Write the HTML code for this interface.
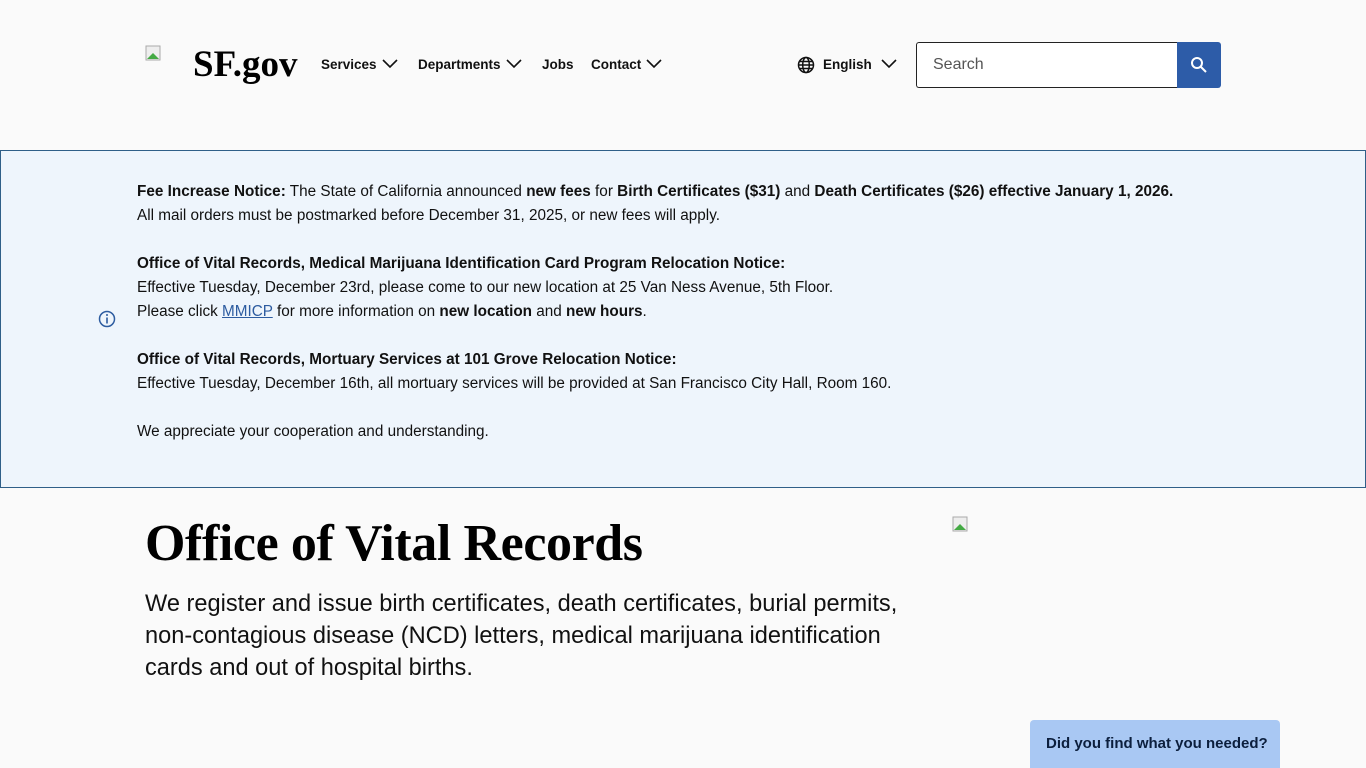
<!DOCTYPE html>
<html><head><meta charset="utf-8"><style>
html,body{margin:0;overflow:hidden}
body{background:#fafafa;font-family:"Liberation Sans",Arial,sans-serif;color:#000;width:1366px;height:768px;position:relative}
.a{position:absolute}
.nav{font-size:13.5px;font-weight:bold;color:#111;top:57px}
.chev{display:inline-block;vertical-align:middle;margin-left:5px;margin-top:-3px}
.box{top:150px;left:0;width:1364px;height:336px;background:#eef5fc;border:1px solid #2f5f88}
.t{left:137px;top:180px;font-size:15.3px;line-height:24px;color:#111}
a{color:#2d5ca0}
</style></head><body>
<svg class="a" style="left:145px;top:45px" width="16" height="16"><rect x="1" y="1" width="14" height="14" fill="#eee" stroke="#aaa"/><path d="M2 14 L8 8 L14 14Z" fill="#4a4"/></svg>
<div class="a" style="left:193px;top:43px;font-family:'Liberation Serif',serif;font-weight:bold;font-size:37px;letter-spacing:0">SF.gov</div>
<div class="a nav" style="left:321px">Services<svg class="chev" width="16" height="10"><path d="M1 1l7 7 7-7" fill="none" stroke="#111" stroke-width="1.6"/></svg></div>
<div class="a nav" style="left:418px">Departments<svg class="chev" width="16" height="10"><path d="M1 1l7 7 7-7" fill="none" stroke="#111" stroke-width="1.6"/></svg></div>
<div class="a nav" style="left:542px">Jobs</div>
<div class="a nav" style="left:591px">Contact<svg class="chev" width="16" height="10"><path d="M1 1l7 7 7-7" fill="none" stroke="#111" stroke-width="1.6"/></svg></div>
<svg class="a" style="left:797px;top:56px" width="18" height="18" viewBox="0 0 18 18" fill="none" stroke="#111" stroke-width="1.5"><circle cx="9" cy="9" r="7.5"/><ellipse cx="9" cy="9" rx="3.3" ry="7.5"/><path d="M1.5 9h15M2.5 5.5h13M2.5 12.5h13"/></svg>
<div class="a nav" style="left:823px">English<svg class="chev" style="margin-left:9px" width="16" height="10"><path d="M1 1l7 7 7-7" fill="none" stroke="#111" stroke-width="1.6"/></svg></div>
<div class="a" style="left:916px;top:42px;width:261px;height:44px;border:1px solid #222;border-right:none;border-radius:3px 0 0 3px;background:#fff"></div>
<div class="a" style="left:933px;top:56px;font-size:16px;color:#555">Search</div>
<div class="a" style="left:1177px;top:42px;width:44px;height:46px;background:#2d5ca8;border-radius:0 3px 3px 0"></div>
<svg class="a" style="left:1190px;top:56px" width="18" height="18"><circle cx="7" cy="7" r="5" fill="none" stroke="#fff" stroke-width="2"/><path d="M11 11l5 5" stroke="#fff" stroke-width="2"/></svg>
<div class="a box"></div>
<svg class="a" style="left:98px;top:310px" width="18" height="18"><circle cx="9" cy="9" r="7.5" fill="none" stroke="#2d5ca0" stroke-width="1.5"/><rect x="8.2" y="7.5" width="1.6" height="6" fill="#2d5ca0"/><circle cx="9" cy="5" r="1" fill="#2d5ca0"/></svg>
<div class="a t">
<b>Fee Increase Notice:</b> The State of California announced <b>new fees</b> for <b>Birth Certificates ($31)</b> and <b>Death Certificates ($26) effective January 1, 2026.</b><br>All mail orders must be postmarked before December 31, 2025, or new fees will apply.<br><br>
<b>Office of Vital Records, Medical Marijuana Identification Card Program Relocation Notice:</b><br>Effective Tuesday, December 23rd, please come to our new location at 25 Van Ness Avenue, 5th Floor.<br>Please click <a href="#">MMICP</a> for more information on <b>new location</b> and <b>new hours</b>.<br><br>
<b>Office of Vital Records, Mortuary Services at 101 Grove Relocation Notice:</b><br>Effective Tuesday, December 16th, all mortuary services will be provided at San Francisco City Hall, Room 160.<br><br>We appreciate your cooperation and understanding.</div>
<div class="a" style="left:145px;top:514px;font-family:'Liberation Serif',serif;font-weight:bold;font-size:52px;letter-spacing:-0.4px">Office of Vital Records</div>
<div class="a" style="left:145px;top:588px;font-size:23.6px;line-height:32px;width:785px;color:#111">We register and issue birth certificates, death certificates, burial permits, non&#8209;contagious disease (NCD) letters, medical marijuana identification cards and out of hospital births.</div>
<svg class="a" style="left:952px;top:516px" width="16" height="16"><rect x="1" y="1" width="14" height="14" fill="#eee" stroke="#aaa"/><path d="M2 14 L8 8 L14 14Z" fill="#4a4"/></svg>
<div class="a" style="left:1030px;top:720px;width:250px;height:48px;background:#a9c8f3;border-radius:4px 4px 0 0"></div>
<div class="a" style="left:1046px;top:735px;font-size:15px;font-weight:bold;color:#0c1f3d">Did you find what you needed?</div>
</body></html>
